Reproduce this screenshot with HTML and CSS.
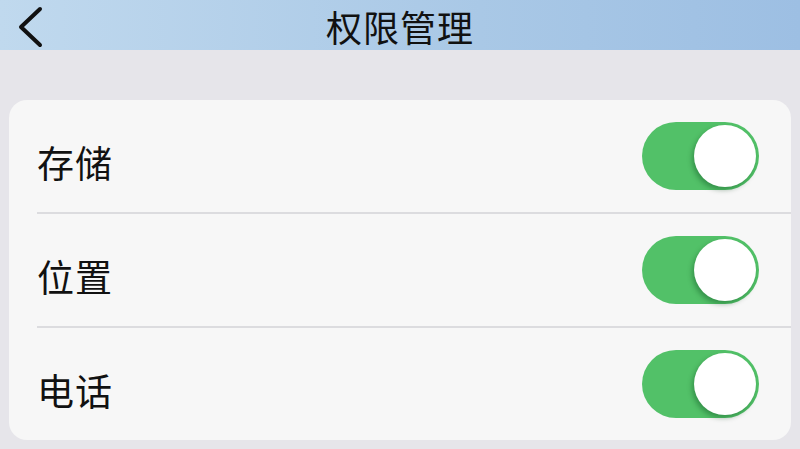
FILE: index.html
```html
<!DOCTYPE html>
<html lang="zh-CN">

<head>
    <meta charset="UTF-8">
    <meta name="viewport" content="width=device-width, initial-scale=1.0">
    <title>权限管理</title>
    <link rel="stylesheet" href="styles.css">
</head>

<body>
    <header class="nav-bar">
        <button class="back" aria-label="返回">
            <svg width="30" height="42" viewBox="0 0 30 42">
                <polyline points="24,3 5,21 24,39" fill="none" stroke="#111" stroke-width="4"
                    stroke-linecap="round" stroke-linejoin="round" />
            </svg>
        </button>
        <h1>权限管理</h1>
    </header>

    <main>
        <section class="settings">
            <div class="row">
                <span class="label">存储</span>
                <label class="switch"><input type="checkbox" checked><span class="knob"></span></label>
            </div>
            <div class="row">
                <span class="label">位置</span>
                <label class="switch"><input type="checkbox" checked><span class="knob"></span></label>
            </div>
            <div class="row">
                <span class="label">电话</span>
                <label class="switch"><input type="checkbox" checked><span class="knob"></span></label>
            </div>
        </section>
    </main>
</body>

</html>
```

FILE: styles.css
```css
:root {
    --bg: #e6e5ea;
    --card: #f7f7f7;
    --line: #dcdcdf;
    --green: #52c168;
    --text: #111;
}

* {
    box-sizing: border-box;
    margin: 0;
    padding: 0;
    font-family: "Noto Sans CJK SC", "Noto Sans", sans-serif;
}

body {
    background-color: var(--bg);
    color: var(--text);
    height: 100vh;
    overflow: hidden;
}

.nav-bar {
    position: relative;
    height: 50px;
    display: flex;
    align-items: center;
    justify-content: center;
    background-image: linear-gradient(to right, #c0d9ee, #a9c8e6 60%, #9dbfe3);
}

.nav-bar h1 {
    font-size: 36px;
    font-weight: 400;
    line-height: 1;
    letter-spacing: 1px;
    margin-top: 2px;
    color: var(--text);
}

.back {
    position: absolute;
    left: 16px;
    top: 6px;
    appearance: none;
    border: none;
    background: none;
    cursor: pointer;
}

main {
    padding: 50px 9px 0 9px;
}

.settings {
    background-color: var(--card);
    border-radius: 18px;
    padding-left: 28px;
    height: 340px;
    display: flex;
    flex-direction: column;
}

.row {
    flex: 1 1 0%;
    display: flex;
    align-items: center;
    justify-content: space-between;
    padding-right: 32px;
    border-bottom: 2px solid var(--line);
}

.row:last-child {
    border-bottom: none;
}

.label {
    font-size: 37px;
    line-height: 1;
    letter-spacing: 1px;
    margin-top: 12px;
}

.switch {
    position: relative;
    width: 117px;
    height: 68px;
    display: block;
}

.switch input {
    display: none;
}

.knob {
    display: block;
    width: 100%;
    height: 100%;
    border-radius: 34px;
    background-color: var(--green);
}

.knob::after {
    content: "";
    position: absolute;
    right: 3px;
    top: 3px;
    width: 62px;
    height: 62px;
    border-radius: 50%;
    background-color: #fff;
    box-shadow: -2px 3px 5px rgba(0, 60, 20, 0.35);
}
```
